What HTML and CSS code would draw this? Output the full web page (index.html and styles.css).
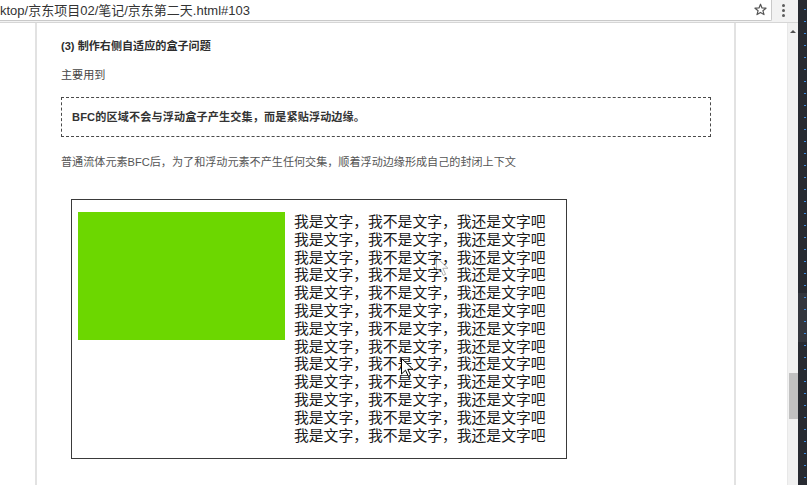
FILE: index.html
```html
<!DOCTYPE html>
<html lang="zh-CN">
<head>
<meta charset="utf-8">
<title>京东第二天</title>
<link rel="stylesheet" href="styles.css">
</head>
<body>
<div class="window">
  <div class="browser">
    <div class="toolbar">
      <div class="omnibox">
        <span class="url">ktop/京东项目02/笔记/京东第二天.html#103</span>
        <svg class="star" width="13" height="13" viewBox="0 0 13 13"><path d="M6.5 1.2 L8 5 L12 5.2 L8.9 7.7 L10 11.6 L6.5 9.4 L3 11.6 L4.1 7.7 L1 5.2 L5 5 Z" fill="none" stroke="#555" stroke-width="1.2" stroke-linejoin="round"/></svg>
      </div>
      <div class="menu"><i></i><i></i><i></i></div>
    </div>
    <div class="viewport">
      <div class="page">
        <div class="paper">
          <h3 class="title">(3) 制作右侧自适应的盒子问题</h3>
          <p class="text first">主要用到</p>
          <div class="note">BFC的区域不会与浮动盒子产生交集，而是紧贴浮动边缘。</div>
          <p class="text para">普通流体元素BFC后，为了和浮动元素不产生任何交集，顺着浮动边缘形成自己的封闭上下文</p>
          <div class="demo">
            <div class="green"></div>
            <div class="lines">
              <div>我是文字，我不是文字，我还是文字吧</div>
              <div>我是文字，我不是文字，我还是文字吧</div>
              <div>我是文字，我不是文字，我还是文字吧</div>
              <div>我是文字，我不是文字，我还是文字吧</div>
              <div>我是文字，我不是文字，我还是文字吧</div>
              <div>我是文字，我不是文字，我还是文字吧</div>
              <div>我是文字，我不是文字，我还是文字吧</div>
              <div>我是文字，我不是文字，我还是文字吧</div>
              <div>我是文字，我不是文字，我还是文字吧</div>
              <div>我是文字，我不是文字，我还是文字吧</div>
              <div>我是文字，我不是文字，我还是文字吧</div>
              <div>我是文字，我不是文字，我还是文字吧</div>
              <div>我是文字，我不是文字，我还是文字吧</div>
            </div>
          </div>
        </div>
      </div>
      <div class="scrollbar">
        <div class="arrow"></div>
        <div class="thumb"></div>
      </div>
    </div>
  </div>
  <div class="strip"><div class="marks"></div></div>
  <svg class="cursor ghost" width="14" height="20" viewBox="0 0 14 20"><path d="M0.5 0.5 L0.5 16 L4.5 12.2 L7.3 18.3 L9.6 17.3 L6.8 11.3 L12 11.3 Z" fill="#fff" stroke="#000" stroke-width="1"/></svg>
  <svg class="cursor main" width="14" height="20" viewBox="0 0 14 20"><path d="M0.5 0.5 L0.5 16 L4.5 12.2 L7.3 18.3 L9.6 17.3 L6.8 11.3 L12 11.3 Z" fill="#fff" stroke="#000" stroke-width="1"/></svg>
</div>
</body>
</html>
```

FILE: styles.css
```css
* { box-sizing: border-box; }
html, body { margin: 0; padding: 0; }
body {
  width: 807px;
  height: 485px;
  overflow: hidden;
  background: #fff;
  font-family: "Liberation Sans", "Noto Sans CJK SC", sans-serif;
}
.window {
  position: relative;
  display: flex;
  width: 807px;
  height: 485px;
}
.browser {
  width: 798px;
  display: flex;
  flex-direction: column;
}
.toolbar {
  height: 23px;
  display: flex;
  background: #f2f2f2;
  border-bottom: 1px solid #d6d6d6;
}
.omnibox {
  width: 772px;
  height: 21px;
  background: #fff;
  border-right: 1px solid #c9c9c9;
  border-bottom: 1px solid #c9c9c9;
  border-bottom-right-radius: 2px;
  display: flex;
  align-items: center;
  justify-content: space-between;
  padding-right: 4px;
}
.url {
  font-size: 13px;
  color: #333;
  white-space: nowrap;
  margin-top: -1px;
}
.star { margin-top: -1px; }
.menu {
  flex: 1;
  display: flex;
  flex-direction: column;
  align-items: center;
  gap: 2px;
  padding-top: 4px;
  padding-right: 4px;
}
.menu i {
  display: block;
  width: 3px;
  height: 3px;
  border-radius: 50%;
  background: #5c5c5c;
}
.viewport {
  flex: 1;
  display: flex;
  min-height: 0;
}
.page {
  width: 787px;
  background: #fff;
  padding-left: 35px;
}
.paper {
  width: 701px;
  height: 100%;
  border-left: 2px solid #e2e2e2;
  border-right: 2px solid #e2e2e2;
  padding: 15px 23px 0 24px;
  font-size: 11.1px;
  line-height: 16px;
}
.title {
  margin: 0;
  font-size: 11.1px;
  line-height: 16px;
  font-weight: bold;
  color: #2e2e2e;
}
.text {
  margin: 0;
  color: #555;
}
.first { margin-top: 13px; color: #444; }
.note {
  margin-top: 14px;
  height: 40px;
  border: 1px dashed #4a4a4a;
  padding: 11px 10px;
  font-weight: bold;
  color: #333;
  letter-spacing: 0.15px;
}
.para { margin-top: 17px; }
.demo {
  margin-top: 29px;
  margin-left: 10px;
  width: 496px;
  height: 260px;
  border: 1px solid #3a3a3a;
  padding: 12px 0 0 6px;
  display: flex;
  align-items: flex-start;
}
.green {
  width: 207px;
  height: 128px;
  background: #6cd700;
  flex: none;
}
.lines {
  margin-left: 9px;
  padding-top: 2px;
  font-family: "Liberation Sans", "Noto Sans CJK SC", sans-serif;
  font-size: 14.8px;
  line-height: 17.8px;
  color: #1a1a1a;
  white-space: nowrap;
}
.lines div { height: 17.8px; }
.scrollbar {
  width: 11px;
  background: #f1f1f1;
  border-left: 1px solid #e8e8e8;
  display: flex;
  flex-direction: column;
  align-items: center;
  padding-top: 7px;
}
.arrow {
  width: 0;
  height: 0;
  border-left: 3px solid transparent;
  border-right: 3px solid transparent;
  border-bottom: 3px solid #505050;
}
.thumb {
  margin-top: 340px;
  width: 9px;
  height: 46px;
  background: #c1c1c1;
}
.strip {
  width: 9px;
  display: flex;
  justify-content: flex-end;
  padding-right: 1px;
  background:
    linear-gradient(to bottom, transparent 293px, #33363d 293px, #33363d 342px, transparent 342px),
    #272a31;
}
.marks {
  width: 2px;
  height: 100%;
  background: repeating-linear-gradient(to bottom, transparent 0, transparent 9px, #3f8de0 9px, #3f8de0 10px, transparent 10px, transparent 12px);
}
.cursor {
  position: absolute;
}
.cursor.main { left: 401px; top: 358px; }
.cursor.ghost { left: 436px; top: 257px; opacity: 0.3; }
```
